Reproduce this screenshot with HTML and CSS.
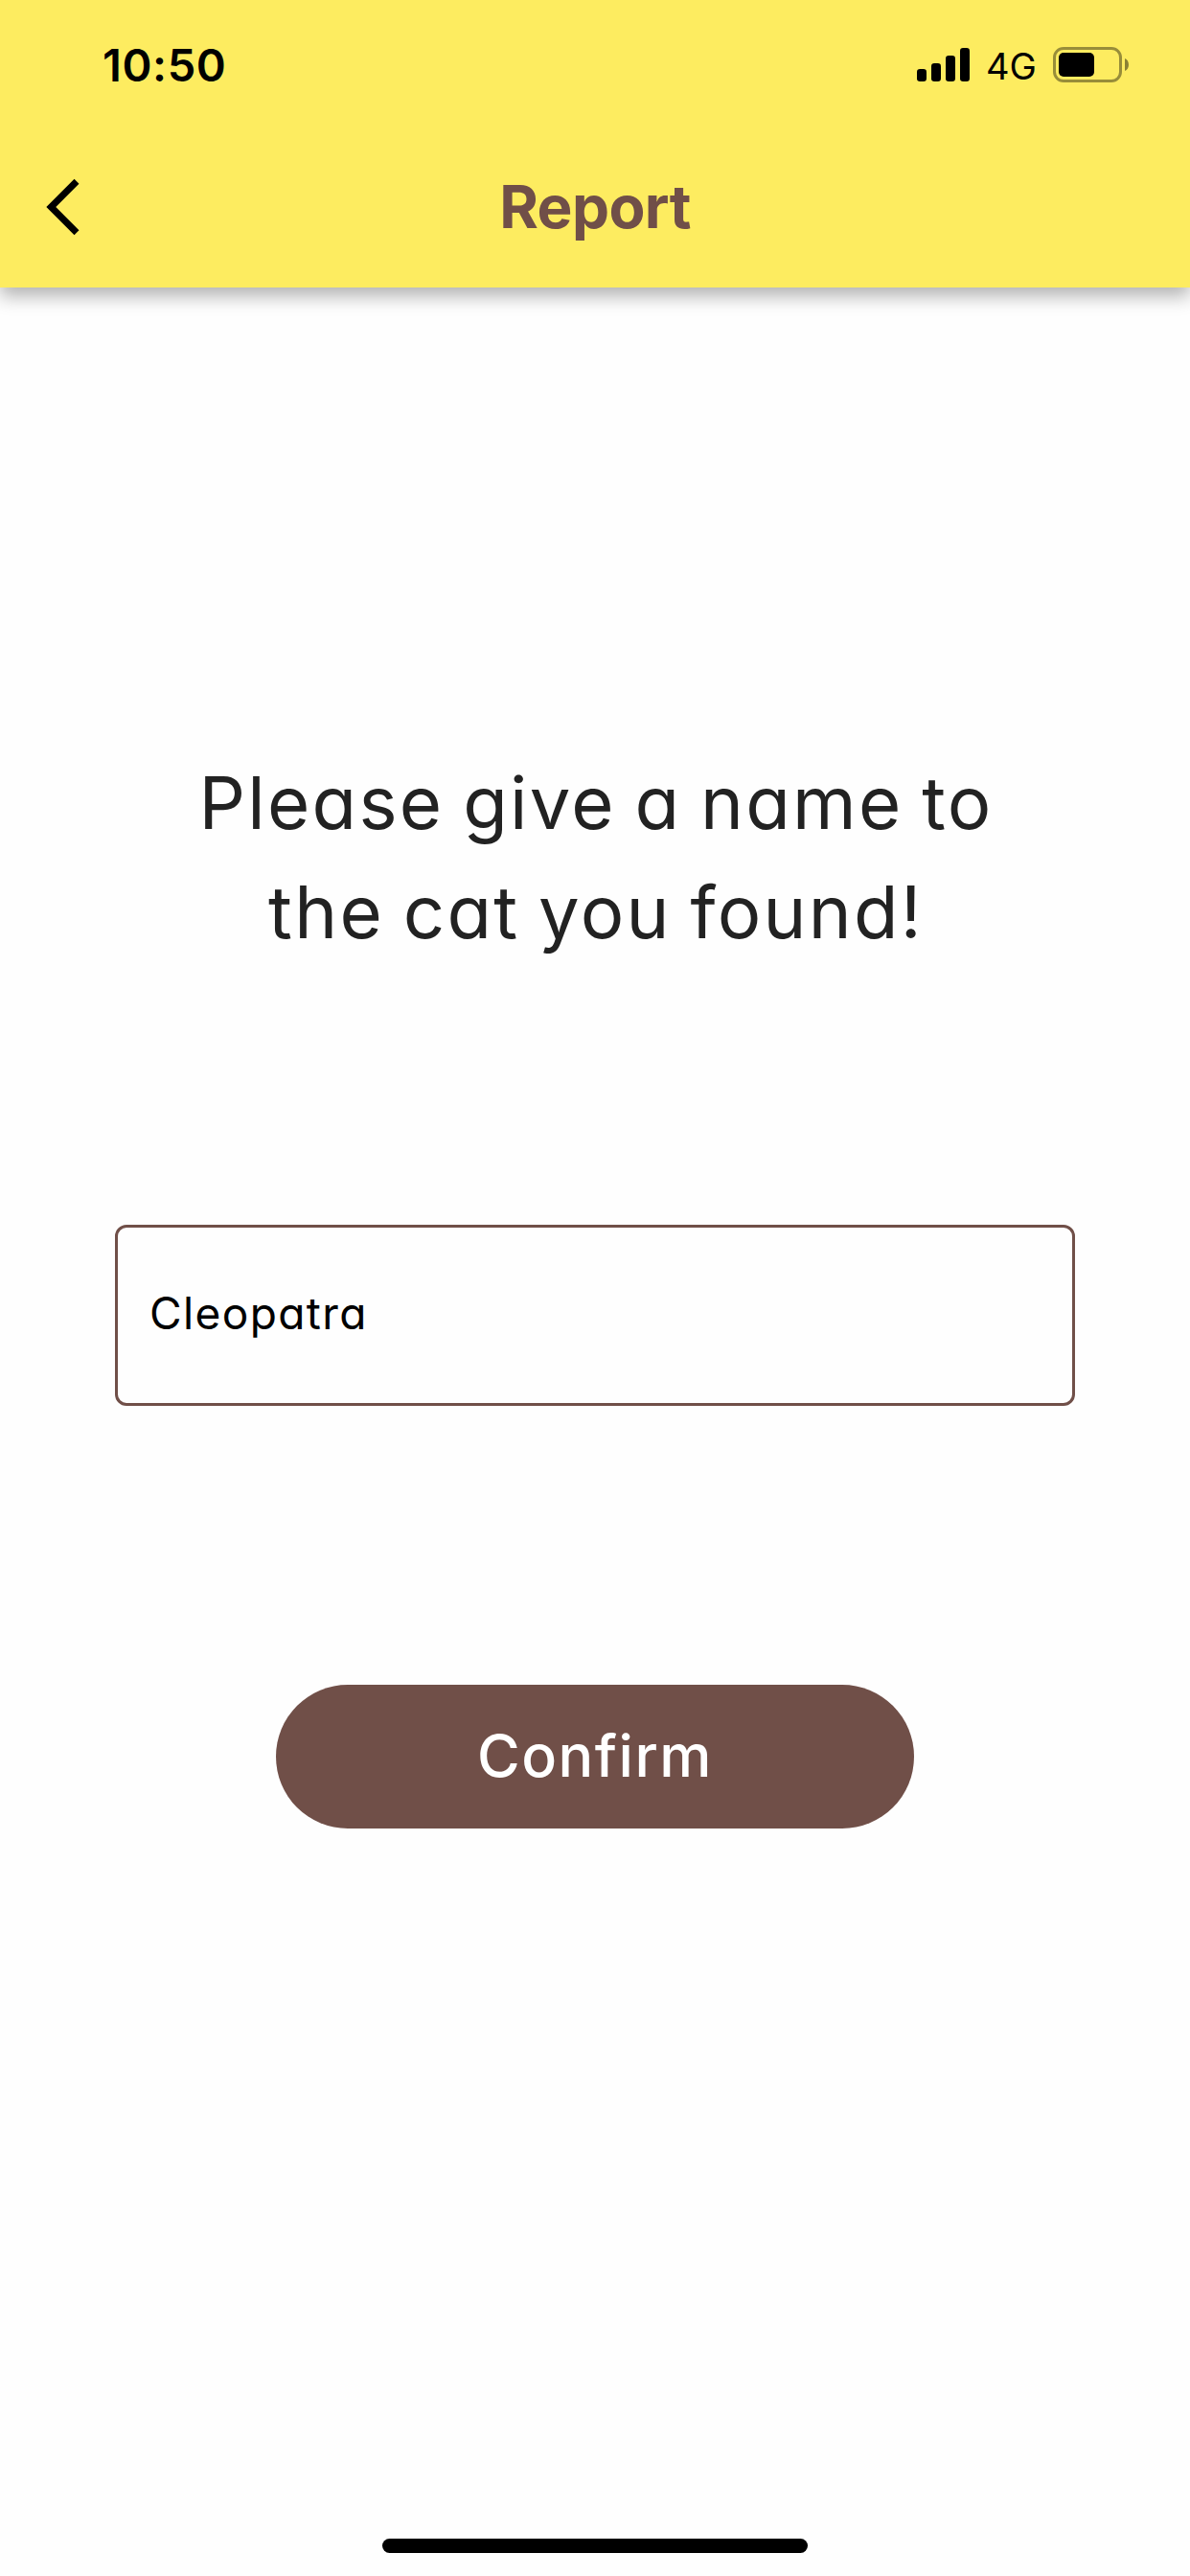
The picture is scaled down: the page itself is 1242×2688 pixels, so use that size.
FILE: index.html
```html
<!DOCTYPE html>
<html lang="en">
<head>
<meta charset="utf-8">
<title>Report</title>
<link rel="stylesheet" href="styles.css">
</head>
<body>
<div class="screen">
  <header class="header">
    <div class="status">
      <span class="time">10:50</span>
      <div class="indicators">
        <svg class="signal" width="55" height="35" viewBox="0 0 55 35"><rect x="0" y="22" width="10" height="13" rx="3.2"/><rect x="15" y="16" width="10" height="19" rx="3.2"/><rect x="30" y="8" width="10" height="27" rx="3.2"/><rect x="45" y="0" width="10" height="35" rx="3.2"/></svg>
        <span class="network">4G</span>
        <svg class="battery" width="79" height="37" viewBox="0 0 79 37"><rect x="1.5" y="1.5" width="69" height="34" rx="9.5" fill="none" stroke="#000" stroke-opacity=".4" stroke-width="3"/><path d="M75 12c5.300 2 5.300 11 0 13z" fill-opacity=".45"/><rect x="6" y="6" width="37" height="25" rx="5"/></svg>
      </div>
    </div>
    <nav class="navbar">
      <svg class="back" width="36" height="60" viewBox="0 0 36 60"><path d="M32 3.300 5.300 30 32 56.700" fill="none" stroke="#000" stroke-width="7"/></svg>
      <h1 class="title">Report</h1>
    </nav>
  </header>
  <main class="content">
    <h2 class="prompt"><span class="line">Please give a name to</span><span class="line">the cat you found!</span></h2>
    <div class="field">Cleopatra</div>
    <button class="confirm" type="button">Confirm</button>
  </main>
  <div class="home-indicator"></div>
</div>
</body>
</html>
```
FILE: styles.css
```css
* { box-sizing: border-box; }
body { margin: 0; background: #fefefe; font-family: Inter, "Open Sans", sans-serif; font-feature-settings: "cv11"; color: #000; }
h1, h2 { margin: 0; }
svg { display: block; }
.screen { display: flex; flex-direction: column; align-items: center; width: 1242px; height: 2688px; overflow: hidden; }
.header { flex: none; width: 100%; height: 300px; background: #fdec60; box-shadow: 0 9px 18px rgba(0, 0, 0, .3); }
.status { display: flex; justify-content: space-between; height: 132px; padding: 38px 64px 0 107px; }
.time { font-size: 47px; font-weight: 600; line-height: 60px; letter-spacing: .6px; }
.indicators { display: flex; align-items: flex-start; padding-top: 11px; }
.signal { margin-top: 1px; }
.network { width: 53px; margin: 0 17px; font-size: 38px; font-weight: 400; line-height: 40px; white-space: nowrap; }
.navbar { display: grid; grid-template-columns: 120px 1fr 120px; align-items: center; height: 168px; }
.back { margin-left: 48px; }
.title { padding-bottom: 1px; text-align: center; font-size: 62px; font-weight: 700; line-height: 80px; letter-spacing: -.6px; color: #704f48; }
.content { flex: 1; display: flex; flex-direction: column; align-items: center; width: 100%; padding-top: 480px; }
.prompt { padding-left: 2px; font-size: 76px; font-weight: 400; line-height: 114px; letter-spacing: 2.3px; word-spacing: -4px; color: #222; text-align: center; }
.line { display: block; white-space: nowrap; }
.field { width: 1002px; height: 189px; margin-top: 270px; padding-left: 33px; border: 3px solid #704f48; border-radius: 12px; font-size: 46px; line-height: 179px; letter-spacing: 1.4px; }
.confirm { width: 666px; height: 150px; margin-top: 291px; padding: 0 0 2px; border: 0; border-radius: 75px; background: #704f48; color: #fff; font: inherit; font-size: 61px; font-weight: 500; line-height: 148px; letter-spacing: 1.5px; }
.home-indicator { flex: none; width: 444px; height: 15px; margin-bottom: 24px; border-radius: 8px; background: #000; }
```
